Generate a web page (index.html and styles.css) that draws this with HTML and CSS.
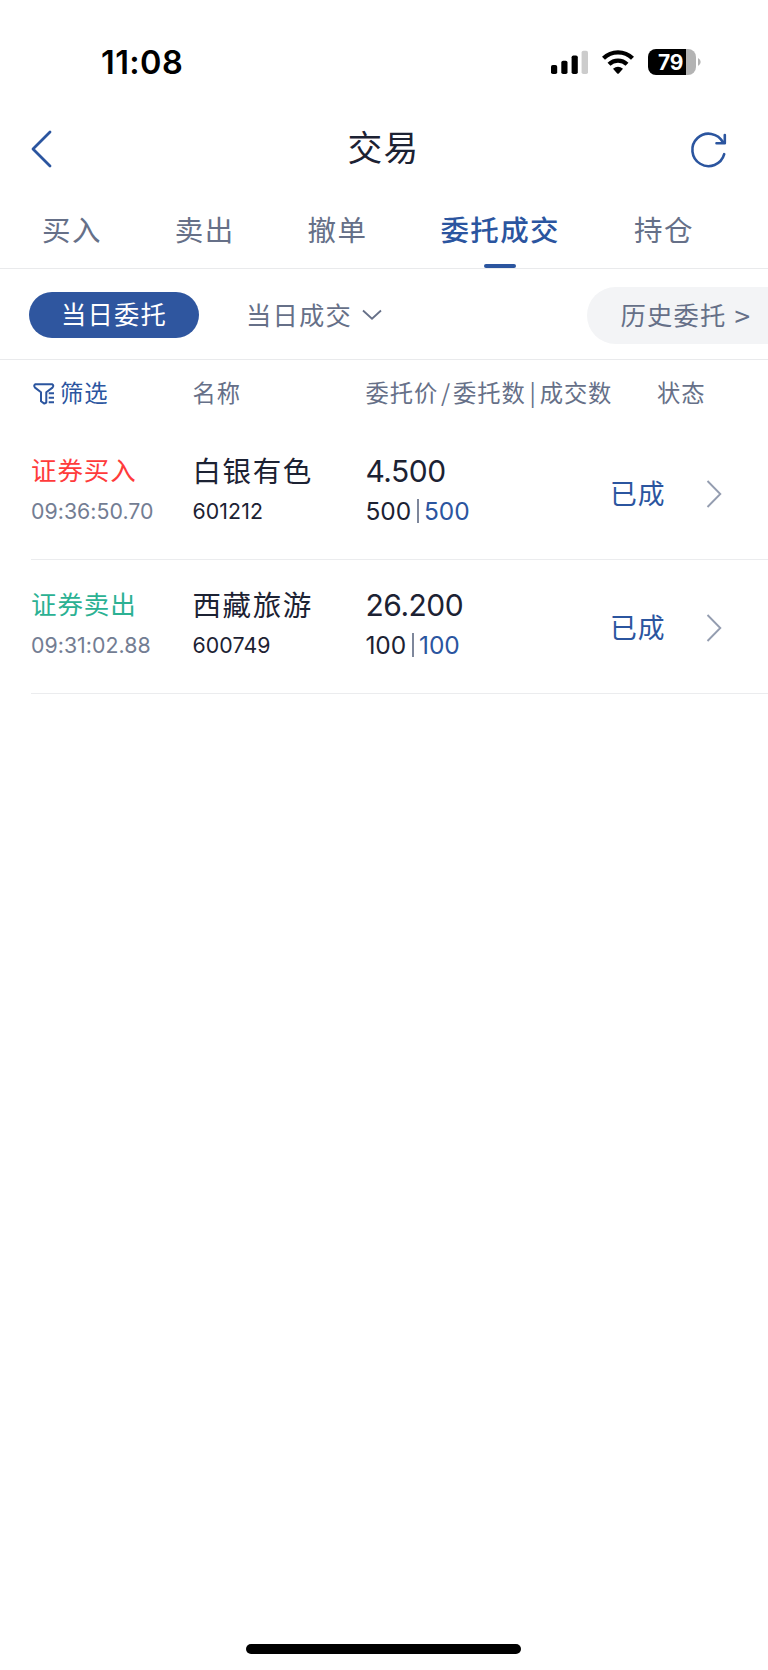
FILE: index.html
```html
<!DOCTYPE html>
<html lang="zh-CN">
<head>
<meta charset="utf-8">
<title>交易</title>
<link rel="stylesheet" href="styles.css">
</head>
<body>
<div class="screen">
  <header class="status">
    <span class="clock">11:08</span>
    <div class="indicators">
      <svg class="signal" width="38" height="26" viewBox="0 0 38 26"><rect x="0" y="16" width="6.2" height="9" rx="1.8"/><rect x="10.3" y="11.8" width="6.2" height="13.2" rx="1.8"/><rect x="20.6" y="6.5" width="6.2" height="18.5" rx="1.8"/><rect x="30.6" y="1.7" width="6.4" height="23.3" rx="1.8" fill="#ccc"/></svg>
      <svg class="wifi" width="32" height="26" viewBox="0 0 32 26"><g fill="none" stroke="#000" stroke-width="4.2"><path d="M1.5 9.3A20.5 20.5 0 0 1 30.5 9.3"/><path d="M7 15.300A12.800 12.800 0 0 1 25 15.300"/></g><path d="M11 19.800Q16 15.800 21 19.800L17 24.200Q16 25.200 15 24.200Z"/></svg>
      <div class="battery"><span class="level">79</span><svg class="nub" width="3" height="8" viewBox="0 0 3 8"><path d="M0 0Q2.700 1.500 2.700 4T0 8Z" fill="#b3b3b3"/></svg></div>
    </div>
  </header>
  <nav class="titlebar">
    <svg class="back" width="22" height="38" viewBox="0 0 22 38"><path d="M20 2L3 19L20 36"/></svg>
    <h1>交易</h1>
    <svg class="refresh" width="36" height="36" viewBox="0 0 36 36"><path d="M33.200 23.200A16.200 16.200 0 1 1 32 11.500M33.800 4V12.200H25.500"/></svg>
  </nav>
  <div class="tabs">
    <span class="tab">买入</span><span class="tab">卖出</span><span class="tab">撤单</span><span class="tab active">委托成交</span><span class="tab last">持仓</span>
  </div>
  <div class="filters">
    <span class="chip">当日委托</span>
    <span class="drop">当日成交<svg width="20" height="12" viewBox="0 0 20 12"><path d="M1 1.500L10 9.700L19 1.500"/></svg></span>
    <span class="history">历史委托<i>&gt;</i></span>
  </div>
  <div class="head grid">
    <span class="sift"><svg width="22" height="22" viewBox="0 0 22 22"><path d="M2.500 1.200H19Q21.300 2.600 19.500 4.600L13.300 9.200V19.500L11.300 20.600L8 18.300V9.200L2 4.600Q.2 2.600 2.500 1.200ZM15.700 10.200H21M15.700 14.700H21M15.700 19.200H21"/></svg>筛选</span>
    <span>名称</span>
    <span class="measure">委托价<b class="slash">/</b>委托数<b class="bar">|</b>成交数</span>
    <span class="state">状态</span>
  </div>
  <main class="orders">
    <section class="order grid">
      <div><p class="side buy">证券买入</p><p class="time">09:36:50.70</p></div>
      <div><p class="name">白银有色</p><p class="code">601212</p></div>
      <div><p class="price">4.500</p><p class="qty">500<i></i><em>500</em></p></div>
      <div class="done"><span>已成</span><svg width="16" height="28" viewBox="0 0 16 28"><path d="M1.500 1L14.300 14L1.500 27"/></svg></div>
    </section>
    <section class="order grid">
      <div><p class="side sell">证券卖出</p><p class="time">09:31:02.88</p></div>
      <div><p class="name">西藏旅游</p><p class="code">600749</p></div>
      <div><p class="price">26.200</p><p class="qty">100<i></i><em>100</em></p></div>
      <div class="done"><span>已成</span><svg width="16" height="28" viewBox="0 0 16 28"><path d="M1.500 1L14.300 14L1.500 27"/></svg></div>
    </section>
  </main>
  <div class="home"></div>
</div>
</body>
</html>
```
FILE: styles.css
```css
* { box-sizing: border-box; }
body, h1, p { margin: 0; }
i, em { font-style: normal; }
svg { display: block; flex: none; }
body { background: #fff; font-family: "Noto Sans CJK SC", sans-serif; color: #1c2233; }
.screen { width: 768px; height: 1670px; overflow: hidden; display: flex; flex-direction: column; white-space: nowrap; }

.status { height: 111px; padding: 42px 72px 0 101px; display: flex; justify-content: space-between; align-items: flex-start; }
.clock { font: 600 32.500px/42px Inter, sans-serif; color: #000; letter-spacing: 0.4px; }
.indicators { display: flex; align-items: center; height: 40px; }
.wifi { margin: 0 14px 0 13px; }
.battery { position: relative; width: 48px; height: 26px; border-radius: 8px; background: linear-gradient(to right, #000 38px, #b3b3b3 38px); }
.level { display: block; padding-left: 10px; font: 700 21px/27px Inter, sans-serif; color: #fff; letter-spacing: -0.3px; }
.nub { position: absolute; left: 50px; top: 9px; }

.titlebar { height: 77px; padding: 0 41px 2px 30px; display: grid; grid-template-columns: 60px 1fr 50px; align-items: center; }
.titlebar h1 { font-size: 34.800px; line-height: 50px; font-weight: 400; text-align: center; letter-spacing: 1.3px; padding-bottom: 5px; }
.back path, .refresh path { fill: none; stroke: #2b559f; stroke-width: 2.8; stroke-linecap: round; stroke-linejoin: round; }
.refresh { justify-self: end; overflow: visible; }
.refresh path { stroke-width: 2.6; }

.tabs { height: 81px; border-bottom: 1px solid #e9eaec; padding-left: 42px; display: flex; font-size: 28.500px; line-height: 82px; letter-spacing: 1.4px; color: #667088; }
.tab { width: 132.800px; position: relative; }
.tab.active { width: 193.600px; color: #2b559f; font-weight: 500; }
.active::after { content: ""; position: absolute; left: 44px; bottom: 0; width: 32px; height: 4px; border-radius: 2px; background: #2b559f; }

.filters { height: 91px; border-bottom: 1px solid #e9eaec; display: flex; align-items: center; padding: 2px 0 0 29px; font-size: 25.300px; letter-spacing: 1.2px; color: #667088; }
.chip { width: 170px; height: 46px; border-radius: 23px; background: #2f569f; color: #fff; line-height: 43px; padding-left: 32px; }
.drop { margin-left: 47px; display: flex; align-items: center; height: 44px; line-height: 43px; padding-bottom: 1px; }
.drop svg { margin-left: 10px; }
.drop path { fill: none; stroke: #667088; stroke-width: 1.8; }
.history { margin-left: auto; width: 181.500px; height: 57px; border-radius: 29px 0 0 29px; background: #f3f4f6; line-height: 55px; padding-left: 34px; }
.history i { margin-left: 8px; font-size: 28px; line-height: 50px; display: inline-block; transform: translateY(2px); }

.grid { display: grid; grid-template-columns: 161.500px 173px 244.500px 1fr; margin-left: 31px; }
.head { height: 66px; font-size: 23.300px; line-height: 64px; letter-spacing: 0.9px; color: #667088; }
.sift { display: flex; align-items: center; color: #2b559f; height: 64px; }
.sift svg { margin: 3px 5px 0 2px; }
.sift path { fill: none; stroke: #2b559f; stroke-width: 2; stroke-linejoin: round; }
.head b { font-weight: 400; display: inline-block; text-align: center; letter-spacing: 0; }
.slash { width: 15px; }
.bar { width: 14px; }
.state { padding-left: 47px; }

.order { height: 134px; border-bottom: 1px solid #ebecee; padding-top: 23px; }
.order p { height: 44px; line-height: 42px; }
.order p + p { height: 36px; line-height: 36px; font-family: Inter, sans-serif; }
.order .side { font-size: 25.500px; letter-spacing: 0.9px; line-height: 40px; }
.buy { color: #ff3b3b; }
.sell { color: #2bb193; }
.order .time { font-size: 21.300px; color: #737d93; letter-spacing: 0.04px; }
.code { font-size: 21.300px; letter-spacing: 0.1px; }
.name { font-size: 28.500px; letter-spacing: 1.6px; }
.order .price { font-family: Inter, sans-serif; font-size: 30px; letter-spacing: -0.5px; line-height: 44px; }
.qty { font-size: 24.500px; letter-spacing: -0.1px; display: flex; align-items: center; }
.qty i { width: 2px; height: 24px; background: #7e879b; margin: 0 5px 0 6px; }
.qty em { color: #2b559f; }
.done { display: flex; align-items: center; height: 88px; font-size: 26.800px; letter-spacing: 1px; color: #2b559f; padding-top: 2px; }
.done span { line-height: 36px; padding-bottom: 3px; }
.done svg { margin-left: 40px; }
.done path { fill: none; stroke: #949db0; stroke-width: 1.900; }

.home { width: 275px; height: 10px; border-radius: 5px; background: #000; margin: auto auto 16px 246px; }
```
